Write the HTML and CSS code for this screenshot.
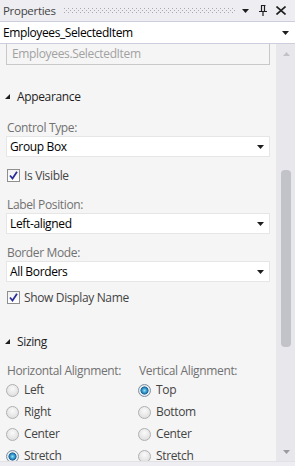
FILE: index.html
```html
<!DOCTYPE html>
<html>
<head>
<meta charset="utf-8">
<link rel="stylesheet" href="styles.css">
</head>
<body>
<div class="panel">
  <div class="titlebar">
    <span class="title">Properties</span>
    <svg class="grip" height="5" preserveAspectRatio="none">
      <defs>
        <pattern id="dots" width="4" height="4" patternUnits="userSpaceOnUse">
          <rect x="0" y="0" width="1" height="1" fill="#a8a8b0"/>
          <rect x="2" y="2" width="1" height="1" fill="#a8a8b0"/>
        </pattern>
      </defs>
      <rect width="100%" height="5" fill="url(#dots)"/>
    </svg>
    <svg class="ticon" width="7" height="4" viewBox="0 0 7 4"><polygon points="0,0 7,0 3.5,4" fill="#1e1e1e"/></svg>
    <svg class="ticon pin" width="8" height="11" viewBox="0 0 8 11"><path d="M2 0.5 H6.5 M2.5 0.5 V6 M5.5 0.5 V6 M0 6.5 H8 M4 6.5 V11" stroke="#1e1e1e" stroke-width="1.2" fill="none"/></svg>
    <svg class="ticon close" width="10" height="9" viewBox="0 0 10 9"><path d="M0.5 0.5 L9.5 8.5 M9.5 0.5 L0.5 8.5" stroke="#1e1e1e" stroke-width="1.6" fill="none"/></svg>
  </div>
  <div class="selector">
    <span>Employees_SelectedItem</span>
    <svg class="arrow" width="7" height="4" viewBox="0 0 7 4"><polygon points="0,0 7,0 3.5,4" fill="#1e1e1e"/></svg>
  </div>
  <div class="main">
    <div class="content">
      <div class="textbox">Employees.SelectedItem</div>

      <div class="section first">
        <svg class="expander" width="5" height="5" viewBox="0 0 5 5"><polygon points="5,0 5,5 0,5" fill="#1e1e1e"/></svg>
        <span>Appearance</span>
      </div>

      <div class="label l-ctype">Control Type:</div>
      <div class="combo"><span>Group Box</span><svg class="arrow" width="7" height="4" viewBox="0 0 7 4"><polygon points="0,0 7,0 3.5,4" fill="#1e1e1e"/></svg></div>

      <div class="check c-visible"><span class="box"><svg width="9" height="9" viewBox="0 0 9 9"><path d="M1 4.5 L3.5 7.5 L8 0.8" stroke="#2a2e9a" stroke-width="1.8" fill="none"/></svg></span><span>Is Visible</span></div>

      <div class="label l-pos">Label Position:</div>
      <div class="combo"><span>Left-aligned</span><svg class="arrow" width="7" height="4" viewBox="0 0 7 4"><polygon points="0,0 7,0 3.5,4" fill="#1e1e1e"/></svg></div>

      <div class="label l-border">Border Mode:</div>
      <div class="combo"><span>All Borders</span><svg class="arrow" width="7" height="4" viewBox="0 0 7 4"><polygon points="0,0 7,0 3.5,4" fill="#1e1e1e"/></svg></div>

      <div class="check c-show"><span class="box"><svg width="9" height="9" viewBox="0 0 9 9"><path d="M1 4.5 L3.5 7.5 L8 0.8" stroke="#2a2e9a" stroke-width="1.8" fill="none"/></svg></span><span>Show Display Name</span></div>

      <div class="section sizing">
        <svg class="expander" width="5" height="5" viewBox="0 0 5 5"><polygon points="5,0 5,5 0,5" fill="#1e1e1e"/></svg>
        <span>Sizing</span>
      </div>

      <div class="align">
        <div class="col">
          <div class="label">Horizontal Alignment:</div>
          <div class="radio"><span class="dot"></span><span class="rtext">Left</span></div>
          <div class="radio"><span class="dot"></span><span class="rtext">Right</span></div>
          <div class="radio"><span class="dot"></span><span class="rtext">Center</span></div>
          <div class="radio"><span class="dot on"></span><span class="rtext">Stretch</span></div>
        </div>
        <div class="col">
          <div class="label">Vertical Alignment:</div>
          <div class="radio"><span class="dot on"></span><span class="rtext">Top</span></div>
          <div class="radio"><span class="dot"></span><span class="rtext">Bottom</span></div>
          <div class="radio"><span class="dot"></span><span class="rtext">Center</span></div>
          <div class="radio"><span class="dot"></span><span class="rtext">Stretch</span></div>
        </div>
      </div>
    </div>
    <div class="scrollbar">
      <svg class="sarrow" width="7" height="4" viewBox="0 0 7 4"><polygon points="0,4 7,4 3.5,0" fill="#c2c3c9"/></svg>
      <div class="track"><div class="thumb"></div></div>
      <svg class="sarrow" width="7" height="4" viewBox="0 0 7 4"><polygon points="0,0 7,0 3.5,4" fill="#9a9aa2"/></svg>
    </div>
  </div>
  <div class="footer"></div>
</div>
</body>
</html>
```

FILE: styles.css
```css
html, body {
  margin: 0;
  padding: 0;
}
body {
  width: 295px;
  height: 466px;
  overflow: hidden;
  background: #f5f5f5;
  font-family: "Open Sans", "Noto Sans", sans-serif;
  font-size: 12px;
  letter-spacing: -0.35px;
  color: #1e1e1e;
}
.panel {
  display: flex;
  flex-direction: column;
  height: 466px;
}
.titlebar {
  height: 21px;
  flex: none;
  background: #eeeef2;
  display: flex;
  align-items: center;
  padding-left: 3px;
  padding-right: 9px;
  box-sizing: border-box;
}
.title {
  font-size: 11.5px;
  letter-spacing: -0.3px;
  color: #444;
}
.grip {
  margin-left: 8px;
  flex: 1;
  min-width: 0;
}
.ticon {
  flex: none;
  margin-left: 6px;
}
.pin {
  margin-left: 10px;
}
.close {
  margin-left: 9px;
}
.selector {
  height: 23px;
  flex: none;
  background: #fff;
  border-top: 1px solid #cccedb;
  border-bottom: 1px solid #cccedb;
  box-sizing: border-box;
  display: flex;
  align-items: center;
  justify-content: space-between;
  padding: 0 6px 0 3px;
  font-size: 12px;
  letter-spacing: -0.4px;
  color: #000;
}
.main {
  flex: 1;
  display: flex;
  min-height: 0;
}
.content {
  flex: 1;
  padding: 0 6px;
}
.textbox {
  height: 21px;
  box-sizing: border-box;
  border: 1px solid #c8c8c8;
  border-top: none;
  color: #a2a2a2;
  padding-left: 5px;
  line-height: 19px;
  font-size: 12px;
}
.section {
  display: flex;
  align-items: center;
  height: 20px;
  margin-left: -1px;
}
.section.first {
  margin-top: 21px;
}
.section.sizing {
  margin-top: 24px;
}
.expander {
  margin-right: 7px;
}
.label {
  color: #717171;
  height: 16px;
  line-height: 16px;
  margin-left: 1px;
}
.l-ctype { margin-top: 14px; }
.l-pos { margin-top: 12px; }
.l-border { margin-top: 11px; }
.combo {
  height: 21px;
  box-sizing: border-box;
  background: #fff;
  border: 1px solid #e6e6e6;
  display: flex;
  align-items: center;
  justify-content: space-between;
  padding: 0 5px 0 3px;
  color: #000;
}
.check {
  display: flex;
  align-items: center;
  height: 20px;
  margin-top: 8px;
  color: #444;
}
.c-show { margin-top: 5px; }
.box {
  width: 11px;
  height: 11px;
  border: 1px solid #8f8f8f;
  background: linear-gradient(#f2f2f2, #fff);
  display: flex;
  align-items: center;
  justify-content: center;
  margin-right: 4px;
  margin-left: 1px;
}
.align {
  display: flex;
  margin-top: 12px;
}
.col {
  width: 132px;
  flex: none;
}
.radio {
  display: flex;
  align-items: center;
  height: 22px;
  color: #444;
}
.col .radio:last-child {
  height: 18px;
  align-items: flex-start;
  padding-top: 4px;
  box-sizing: border-box;
}
.rtext {
  line-height: 14px;
}
.dot {
  width: 11px;
  height: 11px;
  border-radius: 50%;
  border: 1px solid #b0b0b0;
  background: radial-gradient(circle at 50% 35%, #fafafa, #d8d8d8);
  margin-right: 5px;
}
.radio:last-child .dot {
  margin-top: 1px;
}
.dot.on {
  background: radial-gradient(circle at 50% 50%, #8fe3f2 0, #2d8fc6 2.5px, #1b5f93 3.8px, #f2f2f2 4.3px, #dedede 6px);
  border-color: #7a90a3;
}
.scrollbar {
  width: 20px;
  flex: none;
  background: #e8e8ec;
  display: flex;
  flex-direction: column;
  align-items: center;
  padding: 8px 0 7px;
  box-sizing: border-box;
}
.track {
  flex: 1;
  width: 100%;
  display: flex;
  justify-content: center;
  padding-top: 114px;
  box-sizing: border-box;
}
.thumb {
  width: 10px;
  height: 177px;
  background: #c2c3c9;
  border-radius: 4px;
}
.sarrow {
  flex: none;
}
.footer {
  height: 4px;
  flex: none;
  background: #eeeef2;
  border-top: 1px solid #e2e2e6;
}
```
